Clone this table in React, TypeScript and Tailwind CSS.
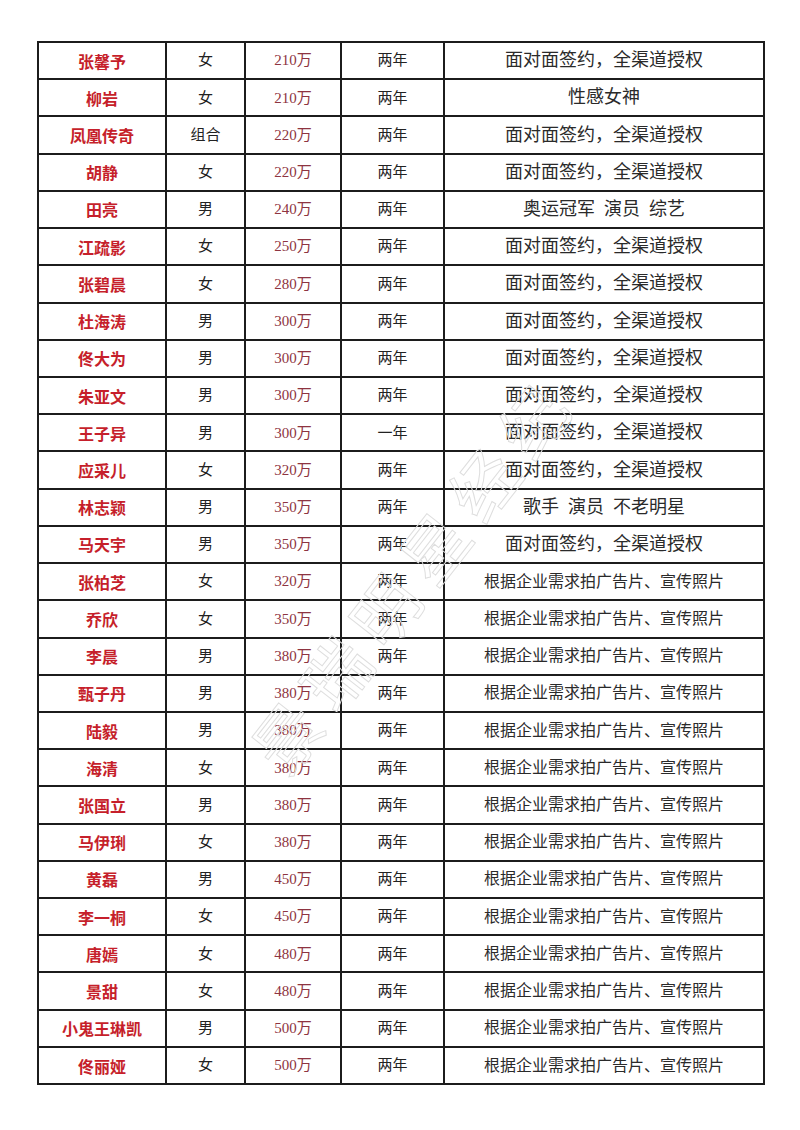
import React from "react";

type Row = [string, string, string, string, string];

const rows: Row[] = [
  ["张馨予", "女", "210万", "两年", "面对面签约，全渠道授权"],
  ["柳岩", "女", "210万", "两年", "性感女神"],
  ["凤凰传奇", "组合", "220万", "两年", "面对面签约，全渠道授权"],
  ["胡静", "女", "220万", "两年", "面对面签约，全渠道授权"],
  ["田亮", "男", "240万", "两年", "奥运冠军  演员  综艺"],
  ["江疏影", "女", "250万", "两年", "面对面签约，全渠道授权"],
  ["张碧晨", "女", "280万", "两年", "面对面签约，全渠道授权"],
  ["杜海涛", "男", "300万", "两年", "面对面签约，全渠道授权"],
  ["佟大为", "男", "300万", "两年", "面对面签约，全渠道授权"],
  ["朱亚文", "男", "300万", "两年", "面对面签约，全渠道授权"],
  ["王子异", "男", "300万", "一年", "面对面签约，全渠道授权"],
  ["应采儿", "女", "320万", "两年", "面对面签约，全渠道授权"],
  ["林志颖", "男", "350万", "两年", "歌手  演员  不老明星"],
  ["马天宇", "男", "350万", "两年", "面对面签约，全渠道授权"],
  ["张柏芝", "女", "320万", "两年", "根据企业需求拍广告片、宣传照片"],
  ["乔欣", "女", "350万", "两年", "根据企业需求拍广告片、宣传照片"],
  ["李晨", "男", "380万", "两年", "根据企业需求拍广告片、宣传照片"],
  ["甄子丹", "男", "380万", "两年", "根据企业需求拍广告片、宣传照片"],
  ["陆毅", "男", "380万", "两年", "根据企业需求拍广告片、宣传照片"],
  ["海清", "女", "380万", "两年", "根据企业需求拍广告片、宣传照片"],
  ["张国立", "男", "380万", "两年", "根据企业需求拍广告片、宣传照片"],
  ["马伊琍", "女", "380万", "两年", "根据企业需求拍广告片、宣传照片"],
  ["黄磊", "男", "450万", "两年", "根据企业需求拍广告片、宣传照片"],
  ["李一桐", "女", "450万", "两年", "根据企业需求拍广告片、宣传照片"],
  ["唐嫣", "女", "480万", "两年", "根据企业需求拍广告片、宣传照片"],
  ["景甜", "女", "480万", "两年", "根据企业需求拍广告片、宣传照片"],
  ["小鬼王琳凯", "男", "500万", "两年", "根据企业需求拍广告片、宣传照片"],
  ["佟丽娅", "女", "500万", "两年", "根据企业需求拍广告片、宣传照片"],
];

export default function App() {
  return (
    <div className="w-[800px] h-[1130px] bg-white relative overflow-hidden font-['Liberation_Serif','Noto_Sans_CJK_SC',serif]">
      <div className="ml-[37px] mt-[41px] w-[728px] h-[1044px] border-2 border-[#1c1c1c] flex flex-col">
        {rows.map((r, i) => (
          <div
            key={i}
            className={`flex-1 flex ${i > 0 ? "border-t-2 border-[#1c1c1c]" : ""}`}
          >
            <div className="w-[126px] flex items-center justify-center text-[16px] font-bold text-[#c61f2b] font-['Noto_Sans_CJK_SC',sans-serif]">
              {r[0]}
            </div>
            <div className="w-[79px] border-l-2 border-[#1c1c1c] flex items-center justify-center text-[15px] text-[#222]">
              {r[1]}
            </div>
            <div className="w-[96px] border-l-2 border-[#1c1c1c] flex items-center justify-center text-[15px] text-[#8e3441]">
              {r[2]}
            </div>
            <div className="w-[103px] border-l-2 border-[#1c1c1c] flex items-center justify-center text-[15px] text-[#222]">
              {r[3]}
            </div>
            <div
              className={`flex-1 border-l-2 border-[#1c1c1c] flex items-center justify-center text-[#2a2a2a] whitespace-pre ${
                r[4].startsWith("根据") ? "text-[16px]" : "text-[18px]"
              }`}
            >
              {r[4]}
            </div>
          </div>
        ))}
      </div>
      <div className="absolute left-[412px] top-[572px] -translate-x-1/2 -translate-y-1/2 -rotate-[52deg] whitespace-nowrap text-[66px] tracking-[14px] text-transparent [-webkit-text-stroke:1px_#dedede] font-['Noto_Sans_CJK_SC',sans-serif] pointer-events-none">
        景瑞明星经纪
      </div>
    </div>
  );
}
